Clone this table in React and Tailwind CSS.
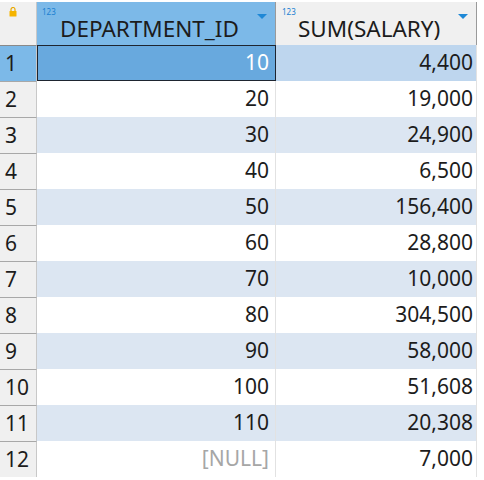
const rows = [
    { n: 1, dept: "10", sum: "4,400" },
    { n: 2, dept: "20", sum: "19,000" },
    { n: 3, dept: "30", sum: "24,900" },
    { n: 4, dept: "40", sum: "6,500" },
    { n: 5, dept: "50", sum: "156,400" },
    { n: 6, dept: "60", sum: "28,800" },
    { n: 7, dept: "70", sum: "10,000" },
    { n: 8, dept: "80", sum: "304,500" },
    { n: 9, dept: "90", sum: "58,000" },
    { n: 10, dept: "100", sum: "51,608" },
    { n: 11, dept: "110", sum: "20,308" },
    { n: 12, dept: null, sum: "7,000" },
];

function Caret() {
    return (
        <svg width="10" height="6" viewBox="0 0 10 6" className="absolute right-[8px] top-[12px]">
            <path d="M0 0 H10 L5 5 Z" fill="#1e88d6" />
        </svg>
    );
}

function Lock() {
    return (
        <svg width="8" height="10" viewBox="0 0 8 10" className="absolute left-[9px] top-[5px]">
            <path d="M2 4 V2.5 A2 2 0 0 1 6 2.5 V4" fill="none" stroke="#e8a800" strokeWidth="1.2" />
            <rect x="0.5" y="4" width="7" height="5.5" rx="0.5" fill="#f5b400" />
        </svg>
    );
}

export default function App() {
    return (
        <div className="w-[484px] h-[480px] bg-white pt-[2px] overflow-hidden font-['Noto_Sans','Open_Sans',sans-serif] text-[21px] text-[#1c1c1c]">
            <div className="grid grid-cols-[37px_239px_201px]">
                <div className="relative h-[43px] bg-[#f0f0f0] border-r border-[#c8c8c8]">
                    <Lock />
                </div>
                <div className="relative h-[43px] bg-[#7cb9e8] border-r border-[#9a9a9a] flex items-end">
                    <span className="absolute left-[5px] top-[6px] text-[8px] leading-none text-[#1a7fd0]">123</span>
                    <span className="pl-[23px] text-[22.5px] leading-none pb-[5px]">DEPARTMENT_ID</span>
                    <Caret />
                </div>
                <div className="relative h-[43px] bg-[#f0f0f0] border-r border-[#9a9a9a] flex items-end">
                    <span className="absolute left-[6px] top-[6px] text-[8px] leading-none text-[#1a7fd0]">123</span>
                    <span className="pl-[22px] text-[22.5px] leading-none pb-[5px]">SUM(SALARY)</span>
                    <Caret />
                </div>

                {rows.map((r) => {
                    const odd = r.n % 2 === 1;
                    const first = r.n === 1;
                    return [
                        <div
                            key={r.n + "n"}
                            className={`h-[36px] flex items-center pl-[5px] border-t border-r ${
                                first ? "bg-[#7cb9e8] border-t-[#8a8a8a] border-r-[#c8c8c8]" : "bg-[#f0f0f0] border-t-[#a8a8a8] border-r-[#c8c8c8]"
                            }`}
                        >
                            {r.n}
                        </div>,
                        <div
                            key={r.n + "d"}
                            className={`h-[36px] flex items-center justify-end pr-[6px] ${
                                first
                                    ? "bg-[#68a9de] border border-[#1e2530] text-white"
                                    : `border-r border-[#e2e2e2] ${odd ? "bg-[#dce6f2]" : "bg-white"}`
                            }`}
                        >
                            {r.dept === null ? <span className="text-[#a6a6a6]">[NULL]</span> : r.dept}
                        </div>,
                        <div
                            key={r.n + "s"}
                            className={`h-[36px] flex items-center justify-end pr-[3px] border-r border-[#e2e2e2] ${
                                first ? "bg-[#bed6ee]" : odd ? "bg-[#dce6f2]" : "bg-white"
                            }`}
                        >
                            {r.sum}
                        </div>,
                    ];
                })}
            </div>
        </div>
    );
}
